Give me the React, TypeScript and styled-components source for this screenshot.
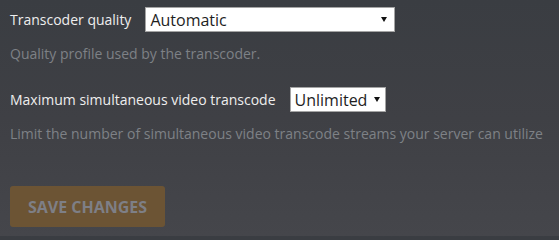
import { ReactElement, useState } from "react";
import styled, { createGlobalStyle } from "styled-components";

const GlobalStyle = createGlobalStyle`
  html, body {
    margin: 0;
    padding: 0;
  }
  body {
    width: 559px;
    height: 236px;
    overflow: hidden;
    background: linear-gradient(180deg, #3a3d42 0%, #3f4045 50%, #45464b 100%);
    font-family: "Open Sans", "Liberation Sans", sans-serif;
  }
`;

type Option = { value: string; label: string };

const qualityOptions: Option[] = [
  { value: "auto", label: "Automatic" },
  { value: "speed", label: "Prefer higher speed encoding" },
  { value: "quality", label: "Prefer higher quality encoding" },
];

const limitOptions: Option[] = [
  { value: "0", label: "Unlimited" },
  { value: "1", label: "1" },
  { value: "2", label: "2" },
  { value: "4", label: "4" },
];

function SelectBox({
  options,
  value,
  onChange,
  width,
  arrowRight,
}: {
  options: Option[];
  value: string;
  onChange: (v: string) => void;
  width: number;
  arrowRight: number;
}): ReactElement {
  return (
    <StyledSelectWrap width={width}>
      <StyledSelect value={value} onChange={(e) => onChange(e.target.value)}>
        {options.map((o) => (
          <option key={o.value} value={o.value}>
            {o.label}
          </option>
        ))}
      </StyledSelect>
      <StyledArrow viewBox="0 0 6 5" right={arrowRight}>
        <path d="M0 0 H6 L3 5 Z" fill="#111" />
      </StyledArrow>
    </StyledSelectWrap>
  );
}

export default function App(): ReactElement {
  const [quality, setQuality] = useState<string>("auto");
  const [limit, setLimit] = useState<string>("0");

  return (
    <>
      <GlobalStyle />
      <StyledForm onSubmit={(e) => e.preventDefault()}>
        <StyledGroup>
          <StyledRow>
            <StyledLabel>Transcoder quality</StyledLabel>
            <SelectBox
              options={qualityOptions}
              value={quality}
              onChange={setQuality}
              width={250}
              arrowRight={8}
            />
          </StyledRow>
          <StyledHelp>Quality profile used by the transcoder.</StyledHelp>
        </StyledGroup>
        <StyledGroup>
          <StyledRow>
            <StyledLabel>Maximum simultaneous video transcode</StyledLabel>
            <SelectBox
              options={limitOptions}
              value={limit}
              onChange={setLimit}
              width={96}
              arrowRight={6}
            />
          </StyledRow>
          <StyledHelp>
            Limit the number of simultaneous video transcode streams your server
            can utilize
          </StyledHelp>
        </StyledGroup>
        <StyledSave type="submit" disabled>
          Save Changes
        </StyledSave>
      </StyledForm>
    </>
  );
}

const StyledForm = styled.form`
  display: flex;
  flex-direction: column;
  align-items: flex-start;
  padding: 7px 10px 0 10px;
`;

const StyledGroup = styled.div`
  display: flex;
  flex-direction: column;
  margin-bottom: 23px;
`;

const StyledRow = styled.div`
  display: flex;
  align-items: center;
  gap: 14px;
  height: 25px;
`;

const StyledLabel = styled.label`
  color: #eeeeee;
  font-size: 14px;
  white-space: nowrap;
`;

const StyledSelectWrap = styled.div<{ width: number }>`
  position: relative;
  width: ${({ width }) => width}px;
  height: 25px;
`;

const StyledSelect = styled.select`
  appearance: none;
  width: 100%;
  height: 100%;
  box-sizing: border-box;
  margin: 0;
  padding: 0 16px 0 4px;
  background: #ffffff;
  border: 1px solid #a4a4a4;
  border-radius: 0;
  color: #1e1e1e;
  font-family: "Open Sans", "Liberation Sans", sans-serif;
  font-size: 16px;
  outline: none;
`;

const StyledArrow = styled.svg<{ right: number }>`
  position: absolute;
  right: ${({ right }) => right}px;
  top: 10px;
  width: 6px;
  height: 5px;
  pointer-events: none;
`;

const StyledHelp = styled.p`
  margin: 12px 0 0 0;
  line-height: 20px;
  color: #7e8186;
  font-size: 14px;
  white-space: nowrap;
`;

const StyledSave = styled.button`
  margin-top: 19px;
  width: 155px;
  height: 41px;
  padding: 0;
  border: none;
  border-radius: 3px;
  background: #6c5434;
  color: #7e7f86;
  font-family: "Open Sans", "Liberation Sans", sans-serif;
  font-weight: 700;
  font-size: 16px;
  text-transform: uppercase;
  cursor: default;
`;
